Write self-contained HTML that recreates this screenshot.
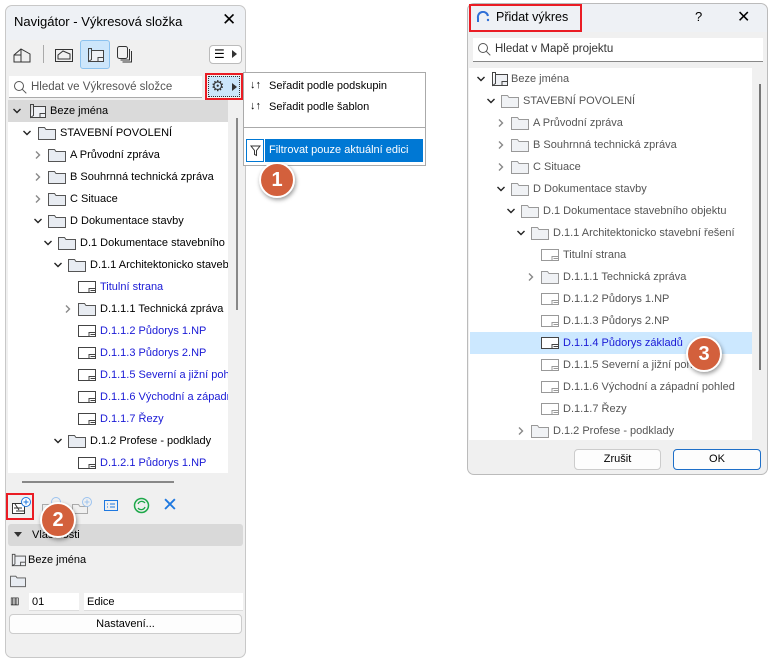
<!DOCTYPE html>
<html><head><meta charset="utf-8"><style>
*{box-sizing:border-box;margin:0;padding:0}
body{width:770px;height:663px;background:#fff;position:relative;overflow:hidden;font-family:"Liberation Sans",sans-serif;font-size:11px;color:#000}
.a{position:absolute}
.row{position:absolute;height:22px;line-height:22px;white-space:nowrap}
.gray{color:#555}
.blue{color:#1a1ad6}
.badge{position:absolute;width:36px;height:36px;border-radius:50%;background:#d3603c;border:2px solid #fff;box-shadow:1px 2px 4px rgba(0,0,0,.4);color:#fff;font-weight:bold;font-size:20px;text-align:center;line-height:32px}
.btn{position:absolute;border:1px solid #ccc;background:#fdfdfd;border-radius:4px;text-align:center}
</style></head><body>
<svg width="0" height="0" style="position:absolute"><defs>
<symbol id="fold" viewBox="0 0 20 16"><path d="M1.5 2.5h6l1.5 2h9.5v10h-17z" fill="#e8ecf2" stroke="#555" stroke-width="1"/></symbol>
<symbol id="foldl" viewBox="0 0 20 16"><path d="M1.5 2.5h6l1.5 2h9.5v10h-17z" fill="#f0f2f5" stroke="#999" stroke-width="1"/></symbol>
<symbol id="sheet" viewBox="0 0 20 16"><path d="M1.5 2.5h17v11h-17z" fill="#fff" stroke="#444"/><path d="M12 13.5v-4h6.5M13.5 11.5h5" fill="none" stroke="#444"/></symbol>
<symbol id="sheetl" viewBox="0 0 20 16"><path d="M1.5 2.5h17v11h-17z" fill="#fff" stroke="#999"/><path d="M12 13.5v-4h6.5M13.5 11.5h5" fill="none" stroke="#999"/></symbol>
<symbol id="book" viewBox="0 0 20 16"><path d="M3.5 1.5l3 -0v11l-3 2zM6.5 1.5h-3v12M6.5 3.5h12v11h-15M13 14.5v-4h5.5" fill="#eef0f4" stroke="#444"/></symbol>
<symbol id="chd" viewBox="0 0 10 10"><path d="M1.5 3l3.5 3.5 3.5-3.5" fill="none" stroke="#222" stroke-width="1.4"/></symbol>
<symbol id="chr" viewBox="0 0 10 10"><path d="M3 1.5l3.5 3.5-3.5 3.5" fill="none" stroke="#888" stroke-width="1.4"/></symbol>
</defs></svg>

<!-- LEFT PANEL -->
<div class="a" style="left:5px;top:5px;width:241px;height:653px;background:#f0f0f0;border:1px solid #c8c8c8;border-radius:7px"></div>
<div class="a" style="left:6px;top:6px;width:239px;height:34px;background:#eef1f5;border-radius:7px 7px 0 0"></div>
<div class="a" style="left:14px;top:14px;font-size:13px">Navigátor - Výkresová složka</div>
<div class="a" style="left:222px;top:10px;font-size:17px">✕</div>
<svg class="a" style="left:12px;top:46px" width="20" height="18" viewBox="0 0 20 18"><path d="M2 16V9l7-6 9 5v8zM9 3v13M2 9h7" fill="none" stroke="#333"/></svg>
<div class="a" style="left:43px;top:45px;width:1px;height:18px;background:#aaa"></div>
<svg class="a" style="left:54px;top:46px" width="20" height="18" viewBox="0 0 20 18"><rect x="1.5" y="3.5" width="17" height="12" fill="none" stroke="#333"/><path d="M4 13V9l5-4 7 3v5z" fill="none" stroke="#333"/></svg>
<div class="a" style="left:80px;top:40px;width:30px;height:29px;background:#cde6fb;border:1px solid #8cc2ef;border-radius:3px"></div>
<svg class="a" style="left:85px;top:46px" width="20" height="18"><use href="#book"/></svg>
<svg class="a" style="left:116px;top:45px" width="18" height="19" viewBox="0 0 18 19"><rect x="1.5" y="1.5" width="10" height="12" rx="2" fill="none" stroke="#333"/><path d="M13.5 4v11h-9M15.5 6v11h-9" fill="none" stroke="#333"/></svg>
<div class="a" style="left:209px;top:45px;width:33px;height:19px;border:1px solid #bbb;border-radius:4px;background:#fff"></div>
<div class="a" style="left:214px;top:49px;font-size:12px;line-height:10px">☰</div>
<div class="a" style="left:232px;top:50px;width:0;height:0;border-left:5px solid #333;border-top:4px solid transparent;border-bottom:4px solid transparent"></div>
<div class="a" style="left:9px;top:76px;width:193px;height:22px;background:#fff;border-bottom:1px solid #aaa"></div>
<svg class="a" style="left:13px;top:80px" width="14" height="14" viewBox="0 0 14 14"><circle cx="6" cy="6" r="4.5" fill="none" stroke="#555"/><path d="M9.3 9.3l4 4" stroke="#555"/></svg>
<div class="a gray" style="left:31px;top:81px;font-size:11.5px">Hledat ve Výkresové složce</div>
<div class="a" style="left:205px;top:73px;width:38px;height:27px;border:2px solid #ea1c24"></div>
<div class="a" style="left:208px;top:76px;width:32px;height:21px;background:#cce6fb;border:1px dotted #333"></div>
<div class="a" style="left:211px;top:77px;font-size:15px;color:#333">⚙</div>
<div class="a" style="left:232px;top:83px;border-left:5px solid #333;border-top:4px solid transparent;border-bottom:4px solid transparent"></div>
<div class="a" style="left:8px;top:100px;width:220px;height:373px;background:#fff"></div>
<div class="a" style="left:8px;top:100px;width:220px;height:22px;background:#dadada"></div>
<div class="a" style="left:236px;top:118px;width:2px;height:192px;background:#888"></div>
<svg class="a" style="left:12px;top:106px" width="10" height="10"><use href="#chd"/></svg>
<svg class="a" style="left:27px;top:103px" width="20" height="16"><use href="#book"/></svg>
<div class="row" style="left:50px;top:100px">Beze jména</div>

<svg class="a" style="left:22px;top:128px" width="10" height="10"><use href="#chd"/></svg>
<svg class="a" style="left:36px;top:125px" width="22" height="16"><use href="#fold"/></svg>
<div class="row" style="left:60px;top:122px">STAVEBNÍ POVOLENÍ</div>
<svg class="a" style="left:33px;top:150px" width="10" height="10"><use href="#chr"/></svg>
<svg class="a" style="left:46px;top:147px" width="22" height="16"><use href="#fold"/></svg>
<div class="row" style="left:70px;top:144px">A Průvodní zpráva</div>
<svg class="a" style="left:33px;top:172px" width="10" height="10"><use href="#chr"/></svg>
<svg class="a" style="left:46px;top:169px" width="22" height="16"><use href="#fold"/></svg>
<div class="row" style="left:70px;top:166px">B Souhrnná technická zpráva</div>
<svg class="a" style="left:33px;top:194px" width="10" height="10"><use href="#chr"/></svg>
<svg class="a" style="left:46px;top:191px" width="22" height="16"><use href="#fold"/></svg>
<div class="row" style="left:70px;top:188px">C Situace</div>
<svg class="a" style="left:33px;top:216px" width="10" height="10"><use href="#chd"/></svg>
<svg class="a" style="left:46px;top:213px" width="22" height="16"><use href="#fold"/></svg>
<div class="row" style="left:70px;top:210px">D Dokumentace stavby</div>

<div class="a" style="left:8px;top:232px;width:220px;height:240px;overflow:hidden">
<svg class="a" style="left:35px;top:6px" width="10" height="10"><use href="#chd"/></svg>
<svg class="a" style="left:48px;top:3px" width="22" height="16"><use href="#fold"/></svg>
<div class="row" style="left:72px;top:0">D.1 Dokumentace stavebního objektu</div>
<svg class="a" style="left:45px;top:28px" width="10" height="10"><use href="#chd"/></svg>
<svg class="a" style="left:58px;top:25px" width="22" height="16"><use href="#fold"/></svg>
<div class="row" style="left:82px;top:22px">D.1.1 Architektonicko stavební řešení</div>
<svg class="a" style="left:68px;top:47px" width="22" height="16"><use href="#sheet"/></svg>
<div class="row blue" style="left:92px;top:44px">Titulní strana</div>
<svg class="a" style="left:55px;top:72px" width="10" height="10"><use href="#chr"/></svg>
<svg class="a" style="left:68px;top:69px" width="22" height="16"><use href="#fold"/></svg>
<div class="row" style="left:92px;top:66px">D.1.1.1 Technická zpráva</div>
<svg class="a" style="left:68px;top:91px" width="22" height="16"><use href="#sheet"/></svg>
<div class="row blue" style="left:92px;top:88px">D.1.1.2 Půdorys 1.NP</div>
<svg class="a" style="left:68px;top:113px" width="22" height="16"><use href="#sheet"/></svg>
<div class="row blue" style="left:92px;top:110px">D.1.1.3 Půdorys 2.NP</div>
<svg class="a" style="left:68px;top:135px" width="22" height="16"><use href="#sheet"/></svg>
<div class="row blue" style="left:92px;top:132px">D.1.1.5 Severní a jižní pohled</div>
<svg class="a" style="left:68px;top:157px" width="22" height="16"><use href="#sheet"/></svg>
<div class="row blue" style="left:92px;top:154px">D.1.1.6 Východní a západní pohled</div>
<svg class="a" style="left:68px;top:179px" width="22" height="16"><use href="#sheet"/></svg>
<div class="row blue" style="left:92px;top:176px">D.1.1.7 Řezy</div>
<svg class="a" style="left:45px;top:204px" width="10" height="10"><use href="#chd"/></svg>
<svg class="a" style="left:58px;top:201px" width="22" height="16"><use href="#fold"/></svg>
<div class="row" style="left:82px;top:198px">D.1.2 Profese - podklady</div>
<svg class="a" style="left:68px;top:223px" width="22" height="16"><use href="#sheet"/></svg>
<div class="row blue" style="left:92px;top:220px">D.1.2.1 Půdorys 1.NP</div>
</div>
<div class="a" style="left:22px;top:481px;width:152px;height:2px;background:#888"></div>
<!-- bottom icons -->
<div class="a" style="left:6px;top:493px;width:28px;height:27px;border:2px solid #ea1c24"></div>
<svg class="a" style="left:10px;top:496px" width="22" height="20" viewBox="0 0 22 20"><rect x="2.5" y="7.5" width="12" height="10" fill="#fff" stroke="#333"/><path d="M5 8l4 6M4 12h8M6 15h8" stroke="#333"/><circle cx="16" cy="6" r="4.5" fill="#fff" stroke="#1e78e0"/><path d="M16 3.5v5M13.5 6h5" stroke="#1e78e0"/></svg>
<svg class="a" style="left:40px;top:496px" width="24" height="20" viewBox="0 0 24 20"><rect x="2.5" y="8.5" width="12" height="9" fill="none" stroke="#aaa"/><circle cx="16" cy="6" r="4.5" fill="none" stroke="#9cc3ef"/></svg>
<svg class="a" style="left:70px;top:496px" width="24" height="20" viewBox="0 0 24 20"><path d="M2.5 8.5h6l1.5 2h7.5v7h-15z" fill="none" stroke="#aaa"/><circle cx="17" cy="6" r="4.5" fill="none" stroke="#9cc3ef"/><path d="M17 3.5v5M14.5 6h5" stroke="#9cc3ef"/></svg>
<svg class="a" style="left:103px;top:499px" width="16" height="13" viewBox="0 0 16 13"><rect x="1.5" y="1.5" width="13" height="10" fill="none" stroke="#1e78e0"/><path d="M4 5h1M7 5h5M4 8h1M7 8h5" stroke="#1e78e0"/></svg>
<svg class="a" style="left:133px;top:497px" width="17" height="17" viewBox="0 0 17 17"><circle cx="8.5" cy="8.5" r="7" fill="none" stroke="#1ea84a" stroke-width="1.5"/><path d="M5 7a4 4 0 0 1 7-1M12 10a4 4 0 0 1-7 1" fill="none" stroke="#1ea84a" stroke-width="1.3"/></svg>
<div class="a" style="left:162px;top:494px;font-size:19px;color:#1e78e0">✕</div>
<div class="a" style="left:8px;top:524px;width:235px;height:22px;background:#d9d9d9;border-radius:3px"></div>
<div class="a" style="left:14px;top:532px;border-top:5px solid #333;border-left:4px solid transparent;border-right:4px solid transparent"></div>
<div class="a" style="left:32px;top:529px;font-size:11px">Vlastnosti</div>
<div class="badge" style="left:40px;top:502px">2</div>
<svg class="a" style="left:9px;top:553px" width="18" height="14"><use href="#book"/></svg>
<div class="a" style="left:28px;top:554px">Beze jména</div>
<svg class="a" style="left:9px;top:574px" width="18" height="14"><use href="#fold"/></svg>
<div class="a" style="left:10px;top:596px;font-size:10px">▥</div>
<div class="a" style="left:29px;top:593px;width:50px;height:18px;background:#fff;border-bottom:1px solid #ddd;padding:3px 3px;line-height:12px">01</div>
<div class="a" style="left:84px;top:593px;width:159px;height:18px;background:#fff;border-bottom:1px solid #ddd;padding:3px 3px;line-height:12px">Edice</div>
<div class="btn" style="left:9px;top:614px;width:233px;height:20px;line-height:18px">Nastavení...</div>

<!-- MENU -->
<div class="a" style="left:243px;top:72px;width:183px;height:94px;background:#fff;border:1px solid #aaa"></div>
<div class="a" style="left:250px;top:79px">↓↑</div>
<div class="a" style="left:269px;top:80px">Seřadit podle podskupin</div>
<div class="a" style="left:250px;top:100px">↓↑</div>
<div class="a" style="left:269px;top:101px">Seřadit podle šablon</div>
<div class="a" style="left:244px;top:127px;width:181px;height:1px;background:#aaa"></div>
<div class="a" style="left:246px;top:139px;width:18px;height:23px;border:1px solid #0078d4;background:#fff"></div>
<svg class="a" style="left:250px;top:145px" width="11" height="12" viewBox="0 0 11 12"><path d="M1 1h9l-3.5 4.5v5l-2-1v-4z" fill="none" stroke="#333"/></svg>
<div class="a" style="left:265px;top:139px;width:158px;height:23px;background:#0078d4;color:#fff;line-height:23px;padding-left:4px">Filtrovat pouze aktuální edici</div>
<div class="badge" style="left:259px;top:162px">1</div>

<!-- RIGHT DIALOG -->
<div class="a" style="left:467px;top:3px;width:301px;height:472px;background:#f0f0f0;border:1px solid #bbb;border-radius:7px"></div>
<div class="a" style="left:468px;top:4px;width:299px;height:28px;background:#eef1f5;border-radius:7px 7px 0 0"></div>
<div class="a" style="left:469px;top:4px;width:113px;height:28px;border:2px solid #ea1c24"></div>
<svg class="a" style="left:476px;top:11px" width="14" height="12" viewBox="0 0 14 12"><path d="M2 11V7a5 5 0 0 1 10-2" fill="none" stroke="#2f6fd6" stroke-width="2"/><circle cx="12" cy="9" r="1.2" fill="#2f6fd6"/></svg>
<div class="a" style="left:496px;top:10px;font-size:12.5px">Přidat výkres</div>
<div class="a" style="left:695px;top:9px;font-size:13px">?</div>
<div class="a" style="left:737px;top:7px;font-size:16px">✕</div>
<div class="a" style="left:473px;top:38px;width:290px;height:24px;background:#fff;border-bottom:1px solid #888"></div>
<svg class="a" style="left:477px;top:42px" width="14" height="14" viewBox="0 0 14 14"><circle cx="6" cy="6" r="4.5" fill="none" stroke="#555"/><path d="M9.3 9.3l4 4" stroke="#555"/></svg>
<div class="a" style="left:495px;top:43px;font-size:11.5px;color:#333">Hledat v Mapě projektu</div>
<div class="a" style="left:469px;top:68px;width:283px;height:372px;background:#fff"></div>
<div class="a" style="left:759px;top:84px;width:2px;height:286px;background:#777"></div>
<div class="a gray" style="left:469px;top:68px;width:283px;height:372px;overflow:hidden">
<svg class="a" style="left:7px;top:6px" width="10" height="10"><use href="#chd"/></svg>
<svg class="a" style="left:20px;top:3px" width="20" height="16"><use href="#book"/></svg>
<div class="row" style="left:42px;top:0">Beze jména</div>
<svg class="a" style="left:17px;top:28px" width="10" height="10"><use href="#chd"/></svg>
<svg class="a" style="left:30px;top:25px" width="22" height="16"><use href="#foldl"/></svg>
<div class="row" style="left:54px;top:22px">STAVEBNÍ POVOLENÍ</div>
<svg class="a" style="left:27px;top:50px" width="10" height="10"><use href="#chr"/></svg>
<svg class="a" style="left:40px;top:47px" width="22" height="16"><use href="#foldl"/></svg>
<div class="row" style="left:64px;top:44px">A Průvodní zpráva</div>
<svg class="a" style="left:27px;top:72px" width="10" height="10"><use href="#chr"/></svg>
<svg class="a" style="left:40px;top:69px" width="22" height="16"><use href="#foldl"/></svg>
<div class="row" style="left:64px;top:66px">B Souhrnná technická zpráva</div>
<svg class="a" style="left:27px;top:94px" width="10" height="10"><use href="#chr"/></svg>
<svg class="a" style="left:40px;top:91px" width="22" height="16"><use href="#foldl"/></svg>
<div class="row" style="left:64px;top:88px">C Situace</div>
<svg class="a" style="left:27px;top:116px" width="10" height="10"><use href="#chd"/></svg>
<svg class="a" style="left:40px;top:113px" width="22" height="16"><use href="#foldl"/></svg>
<div class="row" style="left:64px;top:110px">D Dokumentace stavby</div>
<svg class="a" style="left:37px;top:138px" width="10" height="10"><use href="#chd"/></svg>
<svg class="a" style="left:50px;top:135px" width="22" height="16"><use href="#foldl"/></svg>
<div class="row" style="left:74px;top:132px">D.1 Dokumentace stavebního objektu</div>
<svg class="a" style="left:47px;top:160px" width="10" height="10"><use href="#chd"/></svg>
<svg class="a" style="left:60px;top:157px" width="22" height="16"><use href="#foldl"/></svg>
<div class="row" style="left:84px;top:154px">D.1.1 Architektonicko stavební řešení</div>
<svg class="a" style="left:70px;top:179px" width="22" height="16"><use href="#sheetl"/></svg>
<div class="row" style="left:94px;top:176px">Titulní strana</div>
<svg class="a" style="left:57px;top:204px" width="10" height="10"><use href="#chr"/></svg>
<svg class="a" style="left:70px;top:201px" width="22" height="16"><use href="#foldl"/></svg>
<div class="row" style="left:94px;top:198px">D.1.1.1 Technická zpráva</div>
<svg class="a" style="left:70px;top:223px" width="22" height="16"><use href="#sheetl"/></svg>
<div class="row" style="left:94px;top:220px">D.1.1.2 Půdorys 1.NP</div>
<svg class="a" style="left:70px;top:245px" width="22" height="16"><use href="#sheetl"/></svg>
<div class="row" style="left:94px;top:242px">D.1.1.3 Půdorys 2.NP</div>
<div class="a" style="left:1px;top:264px;width:283px;height:22px;background:#cce8ff"></div>
<svg class="a" style="left:70px;top:267px" width="22" height="16"><use href="#sheet"/></svg>
<div class="row blue" style="left:94px;top:264px">D.1.1.4 Půdorys základů</div>
<svg class="a" style="left:70px;top:289px" width="22" height="16"><use href="#sheetl"/></svg>
<div class="row" style="left:94px;top:286px">D.1.1.5 Severní a jižní pohled</div>
<svg class="a" style="left:70px;top:311px" width="22" height="16"><use href="#sheetl"/></svg>
<div class="row" style="left:94px;top:308px">D.1.1.6 Východní a západní pohled</div>
<svg class="a" style="left:70px;top:333px" width="22" height="16"><use href="#sheetl"/></svg>
<div class="row" style="left:94px;top:330px">D.1.1.7 Řezy</div>
<svg class="a" style="left:47px;top:358px" width="10" height="10"><use href="#chr"/></svg>
<svg class="a" style="left:60px;top:355px" width="22" height="16"><use href="#foldl"/></svg>
<div class="row" style="left:84px;top:352px">D.1.2 Profese - podklady</div>
</div>
<div class="badge" style="left:686px;top:336px">3</div>
<div class="btn" style="left:574px;top:449px;width:87px;height:21px;line-height:19px">Zrušit</div>
<div class="btn" style="left:673px;top:449px;width:88px;height:21px;line-height:19px;border-color:#1e6fc8">OK</div>
</body></html>
